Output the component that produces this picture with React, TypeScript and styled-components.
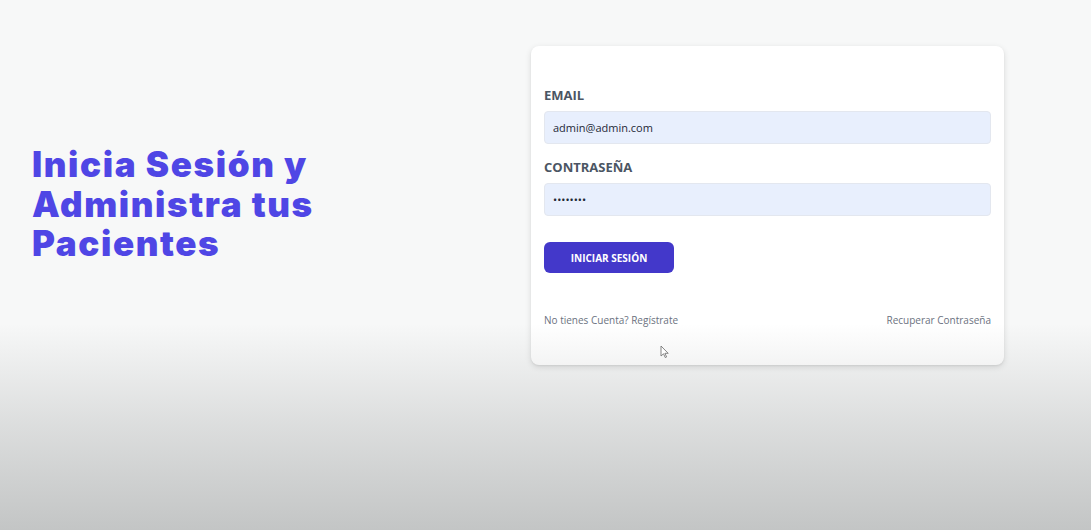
import React from "react";
import styled, { createGlobalStyle } from "styled-components";

const Global = createGlobalStyle`
  html, body { margin: 0; padding: 0; }
  body {
    background: #f7f8f8;
    font-family: "Open Sans", "Noto Sans", sans-serif;
    width: 1091px;
    height: 530px;
    overflow: hidden;
  }
`;

const Page = styled.div`
  position: relative;
  width: 1091px;
  height: 530px;
  box-sizing: border-box;
  padding: 46px 87px 0 32px;
`;

const Grid = styled.main`
  display: grid;
  grid-template-columns: 1fr 473px;
  column-gap: 26px;
  align-items: center;
`;

const Heading = styled.h1`
  margin: 0 0 2px;
  font-family: "Inter", sans-serif;
  font-weight: 900;
  font-size: 35px;
  line-height: 39.5px;
  color: #4f46e5;
  letter-spacing: 1.6px;
`;

const Card = styled.form`
  background: #ffffff;
  border-radius: 8px;
  box-shadow: 0 2px 6px rgba(0, 0, 0, 0.12), 0 1px 2px rgba(0, 0, 0, 0.06);
  padding: 40px 13px 38px;
  display: flex;
  flex-direction: column;
`;

const Field = styled.div`
  display: flex;
  flex-direction: column;
  gap: 7px;
  margin-bottom: ${(p: { $mb: number }) => p.$mb}px;
`;

const Label = styled.label`
  font-size: 13px;
  font-weight: 700;
  color: #4b5563;
  text-transform: uppercase;
  line-height: 18px;
`;

const Input = styled.input`
  box-sizing: border-box;
  height: 33px;
  width: 100%;
  border: 1px solid #e3e7ef;
  border-radius: 4px;
  background: #e8effd;
  padding: 0 8px;
  font-family: "Open Sans", sans-serif;
  font-size: 11px;
  color: #1f2937;
  outline: none;
`;

const Button = styled.button`
  align-self: flex-start;
  width: 130px;
  height: 31px;
  border: none;
  border-radius: 6px;
  background: #4338ca;
  color: #ffffff;
  font-family: "Open Sans", sans-serif;
  font-weight: 700;
  font-size: 10px;
  text-transform: uppercase;
  cursor: pointer;
`;

const Footer = styled.nav`
  display: flex;
  justify-content: space-between;
  margin-top: 40px;
`;

const Link = styled.a`
  font-size: 10px;
  color: #6b7280;
  text-decoration: none;
  line-height: 14px;
`;

const Shade = styled.div`
  position: absolute;
  inset: 0;
  pointer-events: none;
  background: linear-gradient(
    to bottom,
    rgba(0, 0, 0, 0) 0%,
    rgba(0, 0, 0, 0) 61%,
    rgba(40, 45, 45, 0.13) 80%,
    rgba(40, 45, 45, 0.25) 100%
  );
`;

const Cursor = styled.svg`
  position: absolute;
  left: 660px;
  top: 345px;
  pointer-events: none;
`;

export default function App() {
  return (
    <>
      <Global />
      <Page>
        <Grid>
          <Heading>
            Inicia Sesión y<br />
            Administra tus<br />
            Pacientes
          </Heading>
          <Card onSubmit={(e) => e.preventDefault()}>
            <Field $mb={14}>
              <Label htmlFor="email">Email</Label>
              <Input id="email" type="email" defaultValue="admin@admin.com" />
            </Field>
            <Field $mb={26}>
              <Label htmlFor="password">Contraseña</Label>
              <Input id="password" type="password" defaultValue="password" />
            </Field>
            <Button type="submit">Iniciar Sesión</Button>
            <Footer>
              <Link href="#">No tienes Cuenta? Regístrate</Link>
              <Link href="#">Recuperar Contraseña</Link>
            </Footer>
          </Card>
        </Grid>
        <Shade />
        <Cursor width="10" height="14" viewBox="0 0 10 14">
          <path d="M1 1 L1 11 L3.5 8.8 L5.3 12.6 L6.6 12 L4.9 8.3 L8.2 8.3 Z" fill="#fff" stroke="#777" strokeWidth="0.9" strokeLinejoin="round" />
        </Cursor>
      </Page>
    </>
  );
}
